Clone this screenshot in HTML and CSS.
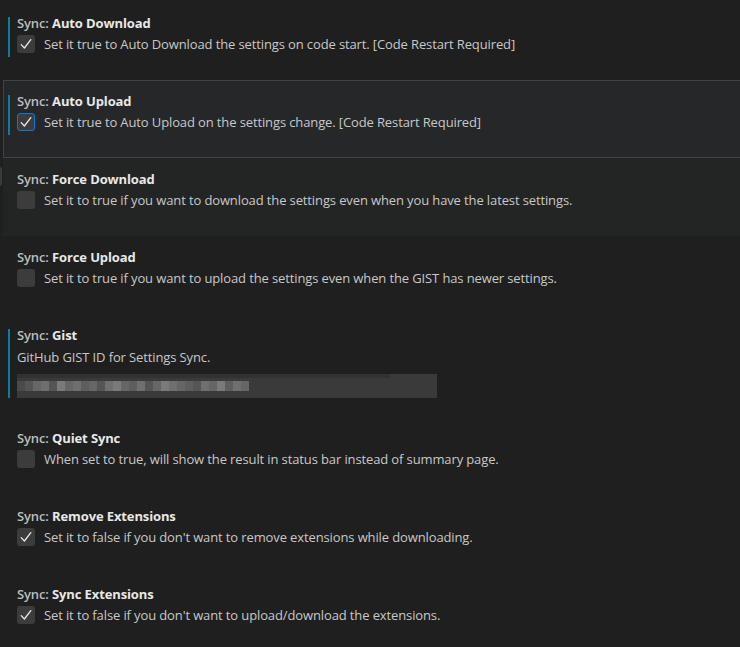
FILE: index.html
```html
<!DOCTYPE html>
<html>
<head>
<meta charset="utf-8">
<link rel="stylesheet" href="styles.css">
</head>
<body>
<div class="edge-thumb"></div>
<div class="list">
  <div class="setting">
    <div class="contents modified">
      <div class="title"><span class="cat">Sync: </span><span class="name">Auto Download</span></div>
      <div class="bool">
        <span class="cb checked"><svg viewBox="0 0 18 18" width="18" height="18"><path d="M4.2 9.6 L7.4 13 L13.8 4.6" fill="none" stroke="#e8e8e8" stroke-width="1.3" stroke-linecap="round" stroke-linejoin="round"/></svg></span>
        <span class="desc">Set it true to Auto Download the settings on code start. [Code Restart Required]</span>
      </div>
    </div>
  </div>
  <div class="setting focused">
    <div class="contents modified">
      <div class="title"><span class="cat">Sync: </span><span class="name">Auto Upload</span></div>
      <div class="bool">
        <span class="cb checked focus"><svg viewBox="0 0 18 18" width="18" height="18"><path d="M4.2 9.6 L7.4 13 L13.8 4.6" fill="none" stroke="#e8e8e8" stroke-width="1.3" stroke-linecap="round" stroke-linejoin="round"/></svg></span>
        <span class="desc">Set it true to Auto Upload on the settings change. [Code Restart Required]</span>
      </div>
    </div>
  </div>
  <div class="setting hovered">
    <div class="contents">
      <div class="title"><span class="cat">Sync: </span><span class="name">Force Download</span></div>
      <div class="bool">
        <span class="cb"></span>
        <span class="desc">Set it to true if you want to download the settings even when you have the latest settings.</span>
      </div>
    </div>
  </div>
  <div class="setting">
    <div class="contents">
      <div class="title"><span class="cat">Sync: </span><span class="name">Force Upload</span></div>
      <div class="bool">
        <span class="cb"></span>
        <span class="desc">Set it to true if you want to upload the settings even when the GIST has newer settings.</span>
      </div>
    </div>
  </div>
  <div class="setting tall">
    <div class="contents modified">
      <div class="title"><span class="cat">Sync: </span><span class="name">Gist</span></div>
      <div class="desc plain">GitHub GIST ID for Settings Sync.</div>
      <div class="input">
        <div class="blur-top"></div>
        <div class="blur-row">
          <i class="f"></i><i class="a"></i><i class="b"></i><i class="c"></i><i class="a"></i><i class="d"></i><i class="b"></i><i class="c"></i><i class="e"></i><i class="b"></i><i class="a"></i><i class="c"></i><i class="d"></i><i class="b"></i><i class="e"></i><i class="c"></i><i class="a"></i><i class="b"></i><i class="d"></i><i class="c"></i><i class="b"></i><i class="e"></i><i class="a"></i><i class="c"></i><i class="b"></i><i class="d"></i><i class="e"></i><i class="c"></i><i class="b"></i>
        </div>
      </div>
    </div>
  </div>
  <div class="setting">
    <div class="contents">
      <div class="title"><span class="cat">Sync: </span><span class="name">Quiet Sync</span></div>
      <div class="bool">
        <span class="cb"></span>
        <span class="desc">When set to true, will show the result in status bar instead of summary page.</span>
      </div>
    </div>
  </div>
  <div class="setting">
    <div class="contents">
      <div class="title"><span class="cat">Sync: </span><span class="name">Remove Extensions</span></div>
      <div class="bool">
        <span class="cb checked"><svg viewBox="0 0 18 18" width="18" height="18"><path d="M4.2 9.6 L7.4 13 L13.8 4.6" fill="none" stroke="#e8e8e8" stroke-width="1.3" stroke-linecap="round" stroke-linejoin="round"/></svg></span>
        <span class="desc">Set it to false if you don't want to remove extensions while downloading.</span>
      </div>
    </div>
  </div>
  <div class="setting">
    <div class="contents">
      <div class="title"><span class="cat">Sync: </span><span class="name">Sync Extensions</span></div>
      <div class="bool">
        <span class="cb checked"><svg viewBox="0 0 18 18" width="18" height="18"><path d="M4.2 9.6 L7.4 13 L13.8 4.6" fill="none" stroke="#e8e8e8" stroke-width="1.3" stroke-linecap="round" stroke-linejoin="round"/></svg></span>
        <span class="desc">Set it to false if you don't want to upload/download the extensions.</span>
      </div>
    </div>
  </div>
</div>
</body>
</html>
```
FILE: styles.css
```css
html, body {
  margin: 0;
  padding: 0;
  background: #1f1f1f;
  overflow: hidden;
  width: 740px;
  height: 647px;
}
body {
  font-family: "Open Sans", "Noto Sans", sans-serif;
  font-size: 13px;
  letter-spacing: -0.12px;
  position: relative;
}
.edge-thumb {
  position: absolute;
  left: 0;
  top: 167px;
  width: 2px;
  height: 19px;
  background: #3a3a3a;
  border-radius: 0 2px 2px 0;
}
.list {
  padding: 2px 0 0 3px;
  width: 745px;
}
.setting {
  height: 76px;
  border: 1px solid transparent;
  padding: 0 0 0 4px;
}
.setting.tall {
  height: 101px;
}
.setting.focused {
  background: #262728;
  border-color: #424242;
}
.setting.hovered {
  background: #232424;
}
.contents {
  margin-top: 14px;
  border-left: 2px solid transparent;
  padding-left: 7px;
}
.contents.modified {
  border-left-color: #0c7d9d;
}
.title {
  line-height: 12px;
  height: 12px;
  white-space: nowrap;
}
.cat {
  color: #bdbdbd;
  font-weight: 600;
}
.name {
  color: #e8e8e8;
  font-weight: 700;
}
.bool {
  display: flex;
  align-items: center;
  gap: 9px;
  margin-top: 6px;
  padding-bottom: 4px;
}
.cb {
  width: 18px;
  height: 18px;
  box-sizing: border-box;
  border-radius: 3px;
  background: #3c3c3c;
  flex: none;
  display: flex;
}
.cb.focus {
  border: 1px solid #0a7ad3;
}
.cb.focus svg {
  margin: -1px;
}
.desc {
  color: #c8c8c8;
  white-space: nowrap;
  line-height: 18px;
}
.desc.plain {
  margin-top: 7px;
  display: block;
}
.input {
  margin-top: 8px;
  width: 420px;
  height: 24px;
  background: #3a3a3a;
}
.blur-top {
  width: 373px;
  height: 4px;
  background: #323232;
}
.blur-row {
  display: flex;
  padding-top: 3px;
  height: 10px;
}
.blur-row i {
  display: block;
  width: 8px;
  height: 10px;
}
.blur-row i.a { background: #555; }
.blur-row i.b { background: #666; }
.blur-row i.c { background: #6f6f6f; }
.blur-row i.d { background: #7a7a7a; }
.blur-row i.e { background: #5e5e5e; }
.blur-row i.f { background: #4a4a4a; }
```
